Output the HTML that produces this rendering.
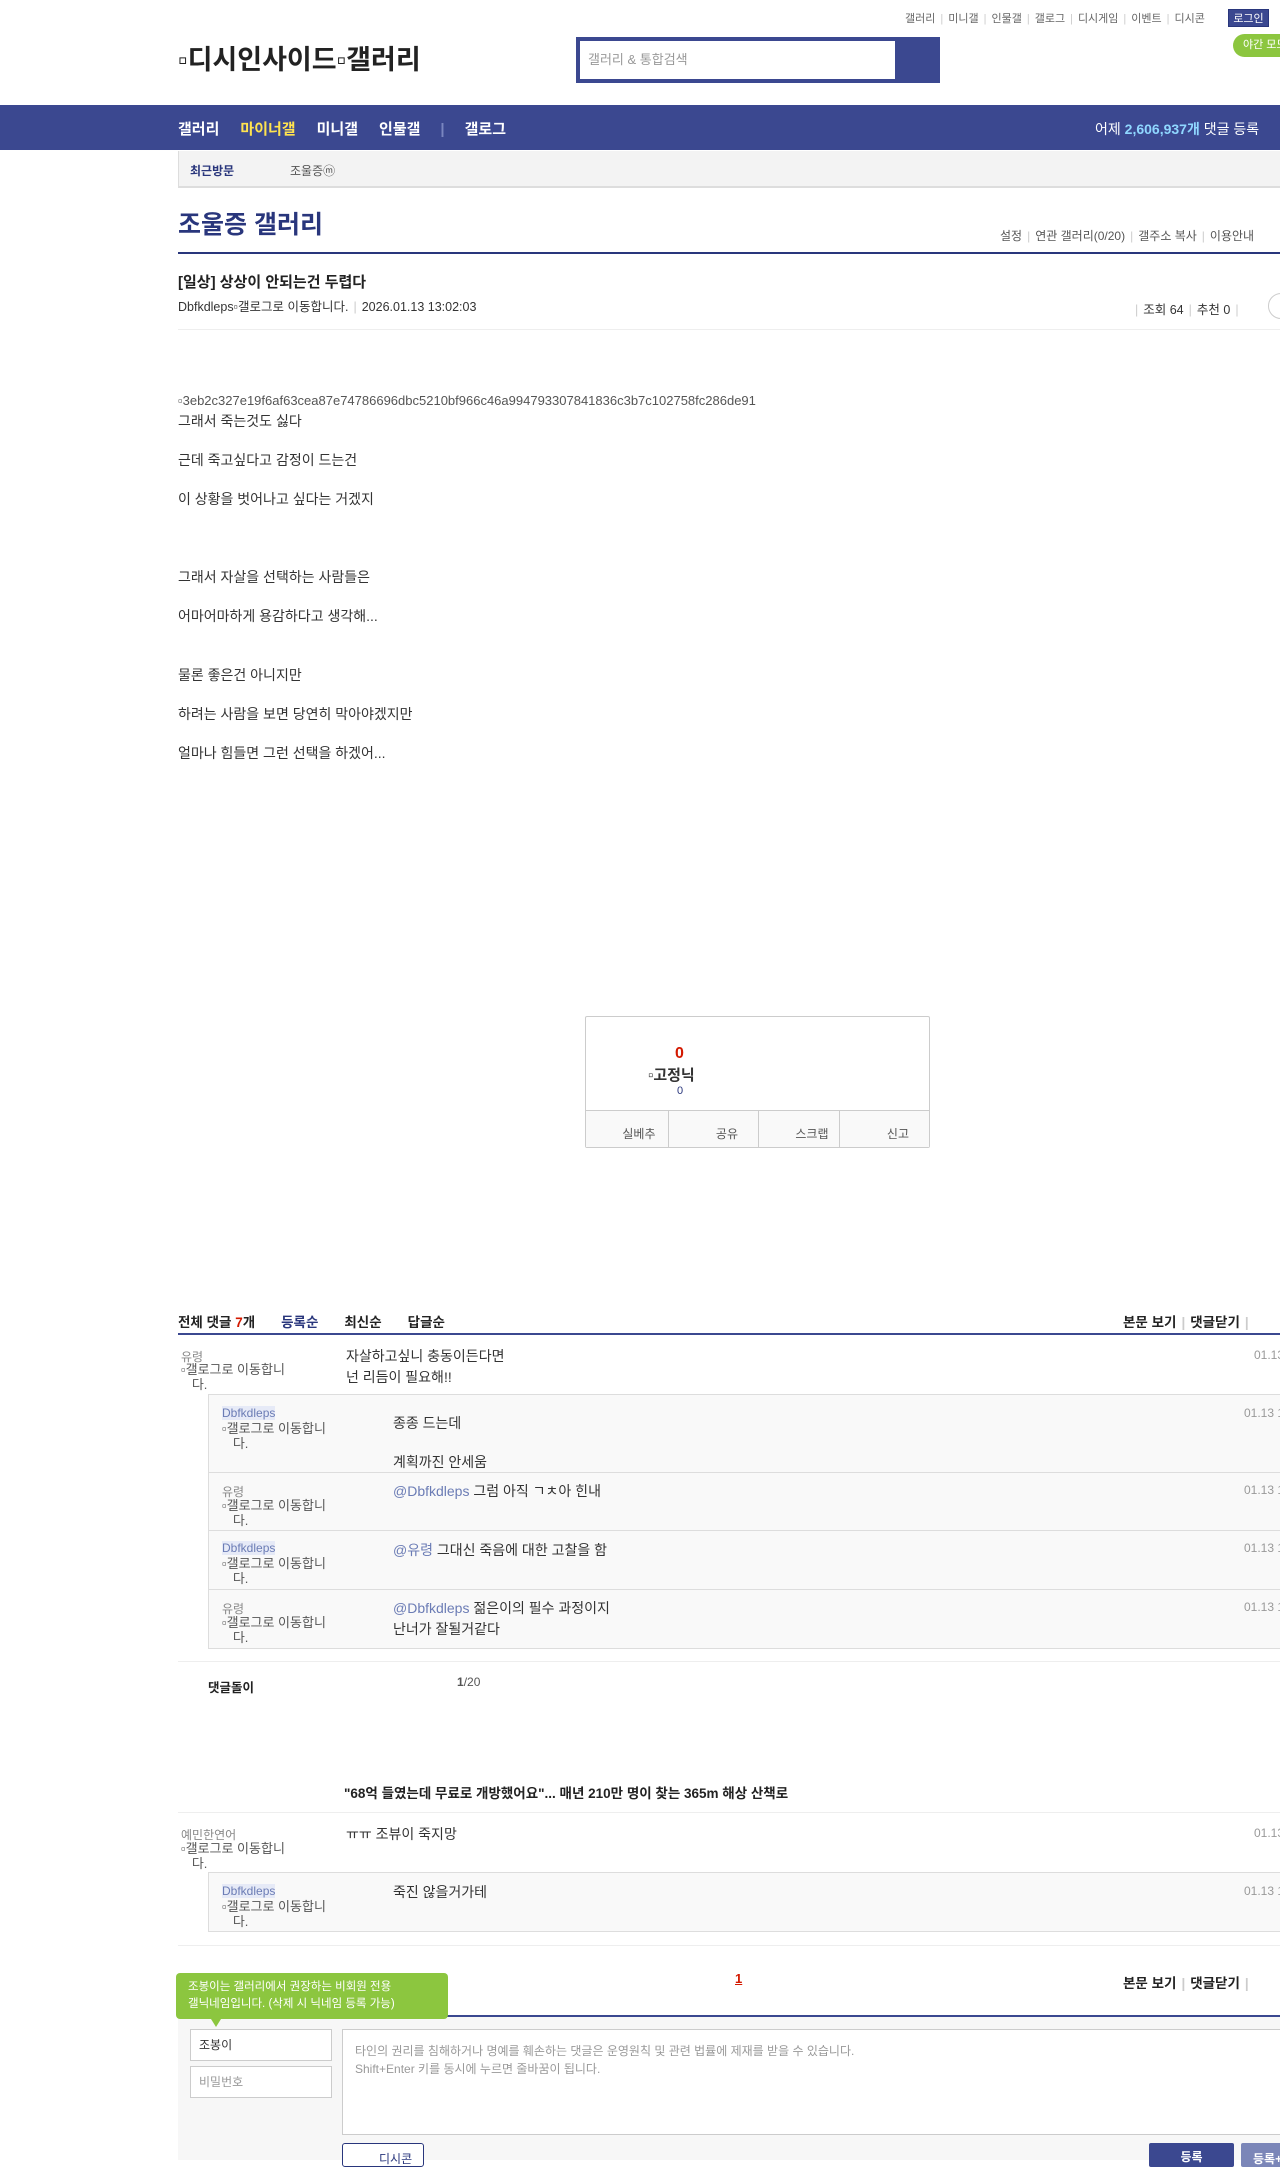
<!DOCTYPE html>
<html><head><meta charset="utf-8">
<style>
*{margin:0;padding:0;box-sizing:border-box}
body{width:1280px;height:2160px;overflow:hidden;position:relative;background:#fff;font-family:"Liberation Sans","Noto Sans CJK KR",sans-serif;font-size:13px;color:#333}
.a{position:absolute;white-space:nowrap}
.g{color:#999}
.sep{color:#ccc;margin:0 5px}
.rb{position:absolute;left:208px;width:1200px;background:#f9f9f9;border-top:1px solid #ddd}
.nm{font-size:12px;color:#888}
.hl{background:#e6eaf7;color:#6b7cb5}
.alt{font-size:13px;color:#555;line-height:15px}
.t{font-size:14px}
</style></head><body>
<div class="a" style="top:10px;left:905px;font-size:11px;color:#666">갤러리<span class="sep">|</span>미니갤<span class="sep">|</span>인물갤<span class="sep">|</span>갤로그<span class="sep">|</span>디시게임<span class="sep">|</span>이벤트<span class="sep">|</span>디시콘</div>
<div class="a" style="top:9px;left:1228px;width:41px;height:18px;background:#3b4890;color:#fff;font-size:11px;text-align:center;line-height:18px;border:1px solid #29367c">로그인</div>
<div class="a" style="top:34px;left:1233px;width:60px;height:23px;background:#8cc63f;border-radius:12px;color:#fff;font-size:11px;line-height:23px;padding-left:10px">야간 모드</div>
<div class="a" style="top:38px;left:178px;font-size:27px;font-weight:bold;color:#222">▫디시인사이드▫갤러리</div>
<div class="a" style="top:37px;left:576px;width:364px;height:46px;background:#3b4890"></div>
<div class="a" style="top:41px;left:580px;width:315px;height:38px;background:#fff;color:#999;font-size:13px;line-height:38px;padding-left:8px">갤러리 &amp; 통합검색</div>
<div class="a" style="top:105px;left:0;width:1280px;height:45px;background:#3b4890"></div>
<div class="a" style="top:118px;left:178px;color:#fff;font-size:15px;font-weight:bold">갤러리<span style="color:#ffe34f;margin-left:21px">마이너갤</span><span style="margin-left:21px">미니갤</span><span style="margin-left:21px">인물갤</span><span style="color:#7a86c0;margin:0 20px">|</span>갤로그</div>
<div class="a" style="top:119px;left:1095px;color:#fff;font-size:14px">어제 <b style="color:#8fd7ff">2,606,937개</b> 댓글 등록</div>
<div class="a" style="top:151px;left:178px;width:1200px;height:37px;background:#f3f3f3;border-left:1px solid #ddd;border-bottom:2px solid #ddd"></div>
<div class="a" style="top:162px;left:190px;font-size:12px;font-weight:bold;color:#29367c">최근방문</div>
<div class="a" style="top:162px;left:290px;font-size:12px;color:#555">조울증ⓜ</div>
<div class="a" style="top:205px;left:178px;font-size:25px;font-weight:bold;color:#29367c">조울증 갤러리</div>
<div class="a" style="top:227px;left:1000px;font-size:12px;color:#555">설정<span class="sep">|</span>연관 갤러리(0/20)<span class="sep">|</span>갤주소 복사<span class="sep">|</span>이용안내</div>
<div class="a" style="top:252px;left:178px;width:1200px;height:2px;background:#29367c"></div>
<div class="a" style="top:271px;left:178px;font-size:15px;font-weight:bold;color:#222">[일상] 상상이 안되는건 두렵다</div>
<div class="a" style="top:296px;left:178px;font-size:12.5px;color:#333">Dbfkdleps▫갤로그로 이동합니다.<span class="sep">|</span>2026.01.13 13:02:03</div>
<div class="a" style="top:299px;left:1130px;font-size:12.5px;color:#333"><span class="sep">|</span>조회 64<span class="sep">|</span>추천 0<span class="sep">|</span></div>
<div class="a" style="top:293px;left:1268px;width:30px;height:26px;border:1px solid #ccc;border-radius:13px"></div>
<div class="a" style="top:329px;left:178px;width:1200px;height:1px;background:#eee"></div>
<div class="a" style="top:393px;left:178px;font-size:13px;color:#555">▫3eb2c327e19f6af63cea87e74786696dbc5210bf966c46a994793307841836c3b7c102758fc286de91</div>
<div class="a t" style="top:402px;left:178px;line-height:39px;color:#333">그래서 죽는것도 싫다<br>근데 죽고싶다고 감정이 드는건<br>이 상황을 벗어나고 싶다는 거겠지<br><br>그래서 자살을 선택하는 사람들은<br>어마어마하게 용감하다고 생각해...</div>
<div class="a t" style="top:656px;left:178px;line-height:39px;color:#333">물론 좋은건 아니지만<br>하려는 사람을 보면 당연히 막아야겠지만<br>얼마나 힘들면 그런 선택을 하겠어...</div>
<div class="a" style="top:1016px;left:585px;width:345px;height:132px;border:1px solid #ccc;border-radius:2px"></div>
<div class="a" style="top:1045px;left:675px;font-size:16px;font-weight:bold;color:#d31900">0</div>
<div class="a" style="top:1064px;left:648px;font-size:15px;font-weight:bold;color:#333">▫고정닉</div>
<div class="a" style="top:1085px;left:677px;font-size:11px;color:#29367c">0</div>
<div class="a" style="top:1110px;left:586px;width:343px;height:37px;background:#f9f9f9;border-top:1px solid #ccc;display:flex">
<div style="flex:1;border-right:1px solid #ccc;text-align:right;padding:14px 12px 0 0;font-size:12px;color:#555">실베추</div>
<div style="flex:1;border-right:1px solid #ccc;text-align:right;padding:14px 20px 0 0;font-size:12px;color:#555">공유</div>
<div style="flex:1;border-right:1px solid #ccc;text-align:right;padding:14px 10px 0 0;font-size:12px;color:#555">스크랩</div>
<div style="flex:1;text-align:right;padding:14px 20px 0 0;font-size:12px;color:#555">신고</div></div>
<div class="a" style="top:1311px;left:178px;font-size:13.5px;font-weight:bold;color:#222">전체 댓글 <span style="color:#d31900">7</span>개<span style="color:#29367c;margin-left:26px">등록순</span><span style="margin-left:26px">최신순</span><span style="margin-left:26px">답글순</span></div>
<div class="a" style="top:1311px;left:1123px;font-size:13.5px;font-weight:bold;color:#222">본문 보기<span class="sep">|</span>댓글닫기<span class="sep">|</span></div>
<div class="a" style="top:1333px;left:178px;width:1200px;height:2px;background:#3b4890"></div>

<div class="a nm" style="top:1348px;left:181px">유령</div>
<div class="a alt" style="top:1362px;left:181px">▫갤로그로 이동합니<br>&nbsp;&nbsp;&nbsp;다.</div>
<div class="a t" style="top:1346px;left:346px;line-height:21px">자살하고싶니 충동이든다면<br>넌 리듬이 필요해!!</div>
<div class="a g" style="top:1348px;left:1254px;font-size:12px">01.13 13:05</div>

<div class="rb" style="top:1394px;height:255px;border-left:1px solid #ddd;border-bottom:1px solid #ddd"></div>
<div class="rb" style="top:1472px;height:0"></div>
<div class="rb" style="top:1530px;height:0"></div>
<div class="rb" style="top:1589px;height:0"></div>

<div class="a nm" style="top:1406px;left:222px"><span class="hl">Dbfkdleps</span></div>
<div class="a alt" style="top:1421px;left:222px">▫갤로그로 이동합니<br>&nbsp;&nbsp;&nbsp;다.</div>
<div class="a t" style="top:1404px;left:393px;line-height:39px">종종 드는데<br>계획까진 안세움</div>
<div class="a g" style="top:1406px;left:1244px;font-size:12px">01.13 13:08</div>

<div class="a nm" style="top:1483px;left:222px">유령</div>
<div class="a alt" style="top:1498px;left:222px">▫갤로그로 이동합니<br>&nbsp;&nbsp;&nbsp;다.</div>
<div class="a t" style="top:1481px;left:393px"><span style="color:#6b7cb5">@Dbfkdleps</span> 그럼 아직 ㄱㅊ아 힌내</div>
<div class="a g" style="top:1483px;left:1244px;font-size:12px">01.13 13:10</div>

<div class="a nm" style="top:1541px;left:222px"><span class="hl">Dbfkdleps</span></div>
<div class="a alt" style="top:1556px;left:222px">▫갤로그로 이동합니<br>&nbsp;&nbsp;&nbsp;다.</div>
<div class="a t" style="top:1540px;left:393px"><span style="color:#6b7cb5">@유령</span> 그대신 죽음에 대한 고찰을 함</div>
<div class="a g" style="top:1541px;left:1244px;font-size:12px">01.13 13:11</div>

<div class="a nm" style="top:1600px;left:222px">유령</div>
<div class="a alt" style="top:1615px;left:222px">▫갤로그로 이동합니<br>&nbsp;&nbsp;&nbsp;다.</div>
<div class="a t" style="top:1598px;left:393px;line-height:21px"><span style="color:#6b7cb5">@Dbfkdleps</span> 젊은이의 필수 과정이지<br>난너가 잘될거같다</div>
<div class="a g" style="top:1600px;left:1244px;font-size:12px">01.13 13:13</div>

<div class="a" style="top:1661px;left:178px;width:1200px;height:1px;background:#eee"></div>
<div class="a" style="top:1677px;left:208px;font-size:12.5px;font-weight:bold;color:#222">댓글돌이</div>
<div class="a" style="top:1675px;left:457px;font-size:12px;color:#555"><b>1</b>/20</div>
<div class="a" style="top:1782px;left:344px;font-size:13.5px;font-weight:bold;color:#222">"68억 들였는데 무료로 개방했어요"... 매년 210만 명이 찾는 365m 해상 산책로</div>
<div class="a" style="top:1812px;left:178px;width:1200px;height:1px;background:#eee"></div>
<div class="a nm" style="top:1826px;left:181px">예민한연어</div>
<div class="a alt" style="top:1841px;left:181px">▫갤로그로 이동합니<br>&nbsp;&nbsp;&nbsp;다.</div>
<div class="a t" style="top:1824px;left:346px">ㅠㅠ 조뷰이 죽지망</div>
<div class="a g" style="top:1826px;left:1254px;font-size:12px">01.13 13:20</div>
<div class="rb" style="top:1872px;height:60px;border-left:1px solid #ddd;border-bottom:1px solid #ddd"></div>
<div class="a nm" style="top:1884px;left:222px"><span class="hl">Dbfkdleps</span></div>
<div class="a alt" style="top:1899px;left:222px">▫갤로그로 이동합니<br>&nbsp;&nbsp;&nbsp;다.</div>
<div class="a t" style="top:1882px;left:393px">죽진 않을거가테</div>
<div class="a g" style="top:1884px;left:1244px;font-size:12px">01.13 13:22</div>
<div class="a" style="top:1945px;left:178px;width:1200px;height:1px;background:#eee"></div>

<div class="a" style="top:1971px;left:735px;font-size:13px;font-weight:bold;color:#d31900;text-decoration:underline">1</div>
<div class="a" style="top:1972px;left:1123px;font-size:13.5px;font-weight:bold;color:#222">본문 보기<span class="sep">|</span>댓글닫기<span class="sep">|</span></div>
<div class="a" style="top:2015px;left:178px;width:1200px;height:2px;background:#3b4890"></div>
<div class="a" style="top:2017px;left:178px;width:1200px;height:143px;background:#f7f7f7"></div>
<div class="a" style="top:1973px;left:176px;width:272px;height:46px;background:#8cc63f;border-radius:4px;color:#fff;font-size:11.5px;line-height:17px;padding:6px 0 0 12px">조봉이는 갤러리에서 권장하는 비회원 전용<br>갤닉네임입니다. (삭제 시 닉네임 등록 가능)</div>
<div class="a" style="top:2019px;left:211px;width:0;height:0;border-left:5px solid transparent;border-right:5px solid transparent;border-top:8px solid #8cc63f"></div>
<div class="a" style="top:2029px;left:190px;width:142px;height:32px;background:#fff;border:1px solid #ccc;font-size:12px;line-height:30px;padding-left:8px;color:#333">조봉이</div>
<div class="a" style="top:2066px;left:190px;width:142px;height:32px;background:#fff;border:1px solid #ccc;font-size:12px;line-height:30px;padding-left:8px;color:#999">비밀번호</div>
<div class="a" style="top:2029px;left:342px;width:950px;height:106px;background:#fff;border:1px solid #ccc;font-size:12px;line-height:18px;padding:12px 0 0 12px;color:#999">타인의 권리를 침해하거나 명예를 훼손하는 댓글은 운영원칙 및 관련 법률에 제재를 받을 수 있습니다.<br>Shift+Enter 키를 동시에 누르면 줄바꿈이 됩니다.</div>
<div class="a" style="top:2143px;left:342px;width:82px;height:24px;background:#fff;border:1px solid #29367c;border-radius:3px;font-size:12px;padding:6px 0 0 36px;color:#29367c">디시콘</div>
<div class="a" style="top:2143px;left:1149px;width:85px;height:24px;background:#3b4890;border-radius:2px;color:#fff;font-size:12px;font-weight:bold;text-align:center;line-height:28px">등록</div>
<div class="a" style="top:2143px;left:1241px;width:85px;height:24px;background:#7b86b8;border-radius:2px;color:#fff;font-size:12px;font-weight:bold;padding:7px 0 0 12px">등록+추천</div>
</body></html>
